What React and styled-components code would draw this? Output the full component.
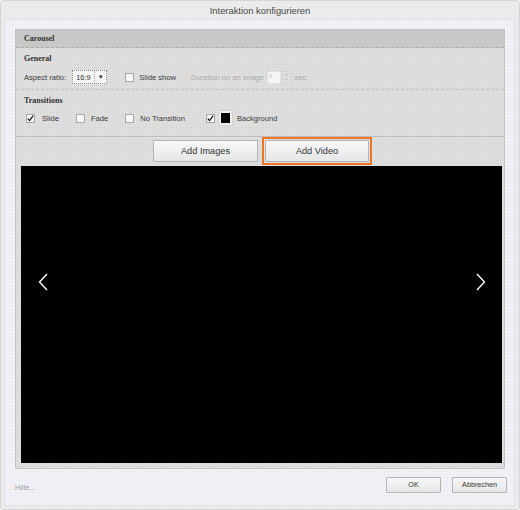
import React from "react";
import styled, { createGlobalStyle } from "styled-components";

const GlobalStyle = createGlobalStyle`
  html, body {
    margin: 0;
    padding: 0;
    background: #ffffff;
  }
  * {
    box-sizing: border-box;
  }
`;

const dots = `
  background-image: radial-gradient(rgba(0, 0, 0, 0.05) 0.6px, transparent 0.8px);
  background-size: 3px 3px;
`;

const Dialog = styled.div`
  width: 520px;
  height: 510px;
  display: flex;
  flex-direction: column;
  background: #ebebeb;
  border: 1px solid #d6d6d6;
  border-radius: 3px;
  font-family: "Liberation Sans", Arial, sans-serif;
  color: #333;
`;

const TitleBar = styled.div`
  height: 18px;
  display: flex;
  align-items: center;
  justify-content: center;
  font-size: 9.4px;
  color: #4a4a4a;
`;

const Body = styled.div`
  flex: 1;
  margin: 0 4px 3px 3px;
  background: #f1f1f7;
  ${dots}
  border: 1px solid #e2e2e8;
  display: flex;
  flex-direction: column;
  padding: 9px 9px 0 10px;
`;

const Panel = styled.div`
  height: 440px;
  display: flex;
  flex-direction: column;
  background: #dedede;
  ${dots}
  border: 1px solid #c4c4c4;
`;

const PanelHeader = styled.div`
  height: 18px;
  display: flex;
  align-items: center;
  padding-left: 8px;
  background: #c8c8c8;
  border-bottom: 1px dashed #b0b0b0;
  font-family: "Liberation Serif", "Times New Roman", serif;
  font-weight: bold;
  font-size: 8px;
  color: #333;
`;

const Section = styled.div`
  height: ${(p) => p.$h}px;
  padding: 5px 0 0 8px;
  border-bottom: ${(p) => p.$solid ? "1px solid #bcbcbc" : "1px dashed #c2c2c2"};
`;

const SectionTitle = styled.div`
  font-family: "Liberation Serif", "Times New Roman", serif;
  font-weight: bold;
  font-size: 8px;
  color: #333;
  height: 12px;
  line-height: 12px;
`;

const Row = styled.div`
  display: flex;
  align-items: center;
  height: 16px;
  margin-top: ${(p) => p.$mt || 0}px;
  font-size: 7.6px;
`;

const Label = styled.span`
  color: ${(p) => p.$muted ? "#ababab" : "#3a3a3a"};
  margin-left: ${(p) => p.$ml || 0}px;
  white-space: nowrap;
`;

const Select = styled.div`
  margin-left: 6px;
  width: 35px;
  height: 14px;
  display: flex;
  align-items: stretch;
  border: 1px dotted #8c8c8c;
  background: #f6f6f6;
  font-size: 7.4px;
  span:first-child {
    flex: 1;
    display: flex;
    align-items: center;
    padding-left: 3px;
    border-right: 1px dotted #b0b0b0;
  }
  span:last-child {
    width: 11px;
    display: flex;
    align-items: center;
    justify-content: center;
    font-size: 6px;
  }
`;

const Box = styled.span`
  width: 9px;
  height: 9px;
  flex: none;
  border: 1px solid #a8a8a8;
  background: #f7f7f7;
  margin-left: ${(p) => p.$ml || 0}px;
  display: flex;
  align-items: center;
  justify-content: center;
`;

const Check = ({ checked, ml }) => (
  <Box $ml={ml}>
    {checked && (
      <svg width="7" height="7" viewBox="0 0 7 7">
        <path d="M0.8 3.6 L2.6 5.6 L6.2 0.6" fill="none" stroke="#111" strokeWidth="1.2" />
      </svg>
    )}
  </Box>
);

const NumberField = styled.span`
  margin-left: 3px;
  width: 14px;
  height: 13px;
  border: 1px dotted #d0d0d0;
  background: #f4f4f4;
  color: #c8c8c8;
  font-size: 6px;
  padding-left: 1px;
  line-height: 9px;
`;

const Spinner = styled.span`
  width: 10px;
  height: 13px;
  margin-left: 1px;
  border: 1px dotted #d0d0d0;
  display: flex;
  flex-direction: column;
  align-items: center;
  justify-content: center;
  color: #c0c0c0;
  font-size: 4px;
  line-height: 5px;
`;

const Swatch = styled.span`
  width: 15px;
  height: 16px;
  margin-left: 3px;
  padding: 2px;
  background: #efefef;
  border: 1px solid #d2d2d2;
  display: flex;
  span {
    flex: 1;
    background: #000;
  }
`;

const ButtonRow = styled.div`
  height: 29px;
  display: flex;
  align-items: flex-start;
  justify-content: center;
  gap: 1px;
  padding-left: 2px;
`;

const Outline = styled.div`
  padding: 1px;
  border: 2px solid ${(p) => p.$on ? "#f07426" : "transparent"};
`;

const Button = styled.button`
  width: ${(p) => p.$w}px;
  height: ${(p) => p.$h}px;
  font-family: "Liberation Sans", Arial, sans-serif;
  font-size: ${(p) => p.$fs}px;
  color: #333;
  border: 1px solid #b4b4b4;
  border-radius: 1px;
  background: linear-gradient(#f8f8f8, #e6e6e6);
  padding: 0;
  cursor: pointer;
`;

const Stage = styled.div`
  height: 297px;
  margin: 0 2px 0 5px;
  background: #000;
  display: flex;
  align-items: flex-start;
  justify-content: space-between;
  padding: 107px 16px 0 17px;
`;

const Footer = styled.div`
  flex: 1;
  display: flex;
  align-items: center;
  justify-content: space-between;
  padding: 0 0 5px 0;
`;

const Hint = styled.span`
  font-size: 7.2px;
  color: #a0a0a0;
  margin-top: 5px;
`;

const FooterButtons = styled.div`
  display: flex;
  gap: 11px;
  margin-right: -2px;
`;

const Chevron = ({ dir }) => (
  <svg width="10" height="18" viewBox="0 0 10 18">
    <path
      d={dir === "left" ? "M9 1 L1.5 9 L9 17" : "M1 1 L8.5 9 L1 17"}
      fill="none"
      stroke="#fff"
      strokeWidth="1.4"
    />
  </svg>
);

export default function App() {
  return (
    <>
      <GlobalStyle />
      <Dialog>
        <TitleBar>Interaktion konfigurieren</TitleBar>
        <Body>
          <Panel>
            <PanelHeader>Carousel</PanelHeader>
            <Section $h={42}>
              <SectionTitle>General</SectionTitle>
              <Row $mt={4}>
                <Label>Aspect ratio:</Label>
                <Select>
                  <span>16:9</span>
                  <span>▼</span>
                </Select>
                <Check ml={18} />
                <Label $ml={5}>Slide show</Label>
                <Label $muted $ml={15}>Duration on an image</Label>
                <NumberField>3</NumberField>
                <Spinner>
                  <span>▲</span>
                  <span>▼</span>
                </Spinner>
                <Label $muted $ml={3}>sec</Label>
              </Row>
            </Section>
            <Section $h={47} $solid>
              <SectionTitle>Transitions</SectionTitle>
              <Row $mt={3}>
                <Check checked ml={2} />
                <Label $ml={7}>Slide</Label>
                <Check ml={17} />
                <Label $ml={6}>Fade</Label>
                <Check ml={17} />
                <Label $ml={6}>No Transition</Label>
                <Check checked ml={21} />
                <Swatch>
                  <span />
                </Swatch>
                <Label $ml={4}>Background</Label>
              </Row>
            </Section>
            <ButtonRow>
              <Outline>
                <Button $w={105} $h={22} $fs={9.2}>Add Images</Button>
              </Outline>
              <Outline $on>
                <Button $w={104} $h={22} $fs={9.2}>Add Video</Button>
              </Outline>
            </ButtonRow>
            <Stage>
              <Chevron dir="left" />
              <Chevron dir="right" />
            </Stage>
          </Panel>
          <Footer>
            <Hint>Hilfe...</Hint>
            <FooterButtons>
              <Button $w={55} $h={16} $fs={7.2}>OK</Button>
              <Button $w={55} $h={16} $fs={7.2}>Abbrechen</Button>
            </FooterButtons>
          </Footer>
        </Body>
      </Dialog>
    </>
  );
}
